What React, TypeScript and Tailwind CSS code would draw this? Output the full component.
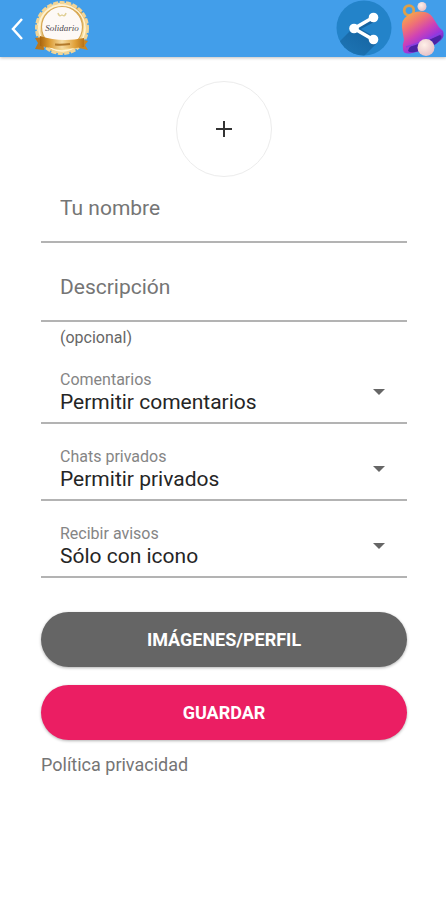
import { ReactNode } from "react";

function Logo() {
  return (
    <svg viewBox="0 0 56 57" className="h-[57px] w-14" role="img" aria-label="Logo">
      <defs>
        <linearGradient id="gold" x1="0" y1="0" x2="1" y2="1">
          <stop offset="0" stopColor="#e3b45c" />
          <stop offset=".25" stopColor="#fff0c4" />
          <stop offset=".5" stopColor="#cf983b" />
          <stop offset=".75" stopColor="#fae3a4" />
          <stop offset="1" stopColor="#bd8429" />
        </linearGradient>
        <linearGradient id="ribbon" x1="0" y1="0" x2="1" y2="0">
          <stop offset="0" stopColor="#a9650f" />
          <stop offset=".2" stopColor="#d9962c" />
          <stop offset=".5" stopColor="#f6dba0" />
          <stop offset=".8" stopColor="#e0a038" />
          <stop offset="1" stopColor="#b87318" />
        </linearGradient>
      </defs>
      <circle cx="29" cy="28" r="25.500" fill="url(#gold)" stroke="#f2d596" strokeWidth="3" strokeDasharray="5 1.500" />
      <circle cx="29" cy="28" r="23" fill="none" stroke="#fff3d3" strokeWidth="1.500" />
      <circle cx="29" cy="27" r="20.500" fill="#fdf9f6" stroke="#d8a955" strokeWidth="1.200" />
      <path d="M25 13q1 4 4 2q3 2 4-2" fill="none" stroke="#e0cf96" strokeWidth="1.500" />
      <text x="29" y="31" textAnchor="middle" fontFamily="Liberation Serif, serif" fontStyle="italic" fontSize="9" fill="#4a464e">Solidario</text>
      <path d="M10 37L2 38L5 43L2 49L11 50Z" fill="#b8761d" />
      <path d="M47 39L55 41L52 45L55 50L46 48Z" fill="#c98725" />
      <path d="M7 36Q28 43 51 38V47Q28 51 7 46Z" fill="url(#ribbon)" />
      <path d="M22 44.500Q29 45 37 44" fill="none" stroke="#b37a2b" strokeWidth="2" />
    </svg>
  );
}

function ShareIcon() {
  return (
    <svg viewBox="0 0 56 57" className="h-[57px] w-14" aria-hidden="true">
      <defs>
        <clipPath id="disc">
          <circle cx="28" cy="28" r="27.500" />
        </clipPath>
        <linearGradient id="shade" x1=".8" y1="0" x2=".2" y2="1">
          <stop offset="0" stopColor="#135f9c" />
          <stop offset="1" stopColor="#1f78b8" />
        </linearGradient>
      </defs>
      <circle cx="28" cy="28" r="27.500" fill="#2383c9" />
      <path clipPath="url(#disc)" d="M14 31L0 45L22 62L41 43L37 36L25 29L40 21L34 17Z" fill="url(#shade)" />
      <path d="M37 17.500L18 28.500L37 39.500" fill="none" stroke="#fff" strokeWidth="3.500" />
      <circle cx="37.500" cy="17.500" r="4.800" fill="#fff" />
      <circle cx="18" cy="28.500" r="4.800" fill="#fff" />
      <circle cx="37.500" cy="39.500" r="4.800" fill="#fff" />
    </svg>
  );
}

function BellIcon() {
  return (
    <svg viewBox="0 0 48 57" className="h-[57px] w-12" aria-hidden="true">
      <defs>
        <linearGradient id="bell" x1=".1" y1=".1" x2=".7" y2="1">
          <stop offset="0" stopColor="#f5a44c" />
          <stop offset=".25" stopColor="#ee6f78" />
          <stop offset=".48" stopColor="#d043b4" />
          <stop offset=".7" stopColor="#9a35dc" />
          <stop offset="1" stopColor="#4c2cb8" />
        </linearGradient>
        <radialGradient id="pearl" cx=".4" cy=".35" r=".75">
          <stop offset="0" stopColor="#fff0e8" />
          <stop offset="1" stopColor="#e3bcc4" />
        </radialGradient>
      </defs>
      <circle cx="11" cy="10.500" r="4.800" fill="none" stroke="#dca04a" strokeWidth="2.800" />
      <circle cx="24" cy="6.500" r="4.500" fill="url(#pearl)" />
      <path d="M4 28Q3 20 9 16Q17 10 27 12Q33 13 37 21Q40 27 45 31Q47 36 43 40Q34 49 14 53Q6 55 5 50Q4 45 6 40Q5 34 4 28Z" fill="url(#bell)" />
      <path d="M10 51Q10 45 24 42Q34 39 42 35Q45 36 42 40Q35 48 17 52Q12 53 10 51Z" fill="#4a23a4" />
      <path d="M8 47Q24 43 44 32" fill="none" stroke="#8a3ee0" strokeWidth="1.500" />
      <circle cx="28" cy="47.500" r="8.500" fill="url(#pearl)" />
    </svg>
  );
}

function SelectField({ id, label, options }: { id: string; label: string; options: string[] }) {
  return (
    <div className="relative h-[77px] border-b-2 border-[#b3b3b3] pt-[23px]">
      <label htmlFor={id} className="block pl-[19px] text-[16px] leading-5 text-[#858585]">{label}</label>
      <select id={id} className="block h-6 w-full appearance-none bg-transparent pl-[19px] text-[21px] leading-6 text-[#252525] outline-none">
        {options.map((o) => <option key={o}>{o}</option>)}
      </select>
      <svg viewBox="0 0 12 6" className="pointer-events-none absolute top-[42px] right-[22px] h-1.5 w-3" aria-hidden="true">
        <path d="M0 0H12L6 6Z" fill="#666" />
      </svg>
    </div>
  );
}

function PillButton({ className, children }: { className: string; children: ReactNode }) {
  return (
    <button type="submit" className={`h-[55px] w-full rounded-full text-[18px] font-bold text-white shadow-[0_1px_3px_rgba(0,0,0,0.3)] ${className}`}>
      {children}
    </button>
  );
}

export default function App() {
  return (
    <div className="min-h-screen bg-white font-['Roboto',sans-serif]">
      <header className="flex h-[57px] items-center bg-[#429eea] shadow-[0_1px_3px_rgba(0,0,0,0.25)]">
        <button type="button" aria-label="Volver" className="flex h-full w-[33px] items-center justify-center">
          <svg viewBox="0 0 12 22" className="h-[22px] w-3" fill="none" stroke="#fff" strokeWidth="2.500" aria-hidden="true">
            <path d="M11 1L2 11L11 21" />
          </svg>
        </button>
        <Logo />
        <button type="button" aria-label="Compartir" className="ml-auto"><ShareIcon /></button>
        <button type="button" aria-label="Avisos" className="ml-1.5"><BellIcon /></button>
      </header>

      <form className="pt-6 pr-[39px] pl-[41px]" onSubmit={(e) => e.preventDefault()}>
        <button type="button" aria-label="Añadir foto" className="mx-auto flex size-24 items-center justify-center rounded-full border border-[#ececec]">
          <svg viewBox="0 0 18 18" className="size-[18px]" stroke="#333" strokeWidth="2" aria-hidden="true">
            <path d="M9 1V17M1 9H17" />
          </svg>
        </button>
        <input aria-label="Tu nombre" placeholder="Tu nombre" className="block h-[66px] w-full border-b-2 border-[#b3b3b3] pb-0.5 pl-[19px] text-[21px] text-[#252525] outline-none placeholder:text-[#757575]" />
        <input aria-label="Descripción" aria-describedby="optional" placeholder="Descripción" className="mt-3 block h-[67px] w-full border-b-2 border-[#b3b3b3] pb-0.5 pl-[19px] text-[21px] text-[#252525] outline-none placeholder:text-[#757575]" />
        <p id="optional" className="h-[25px] pt-1.5 pl-[19px] text-[16px] leading-5 text-[#666]">(opcional)</p>
        <SelectField id="comments" label="Comentarios" options={["Permitir comentarios", "No permitir comentarios"]} />
        <SelectField id="chats" label="Chats privados" options={["Permitir privados", "No permitir privados"]} />
        <SelectField id="alerts" label="Recibir avisos" options={["Sólo con icono", "Sin avisos"]} />
        <div className="mt-[34px] flex flex-col gap-[18px]">
          <PillButton className="bg-[#656565]">IMÁGENES/PERFIL</PillButton>
          <PillButton className="bg-[#eb1e63]">GUARDAR</PillButton>
        </div>
        <a href="#privacidad" className="mt-[13px] inline-block text-[18px] leading-6 text-[#757575]">Política privacidad</a>
      </form>
    </div>
  );
}
